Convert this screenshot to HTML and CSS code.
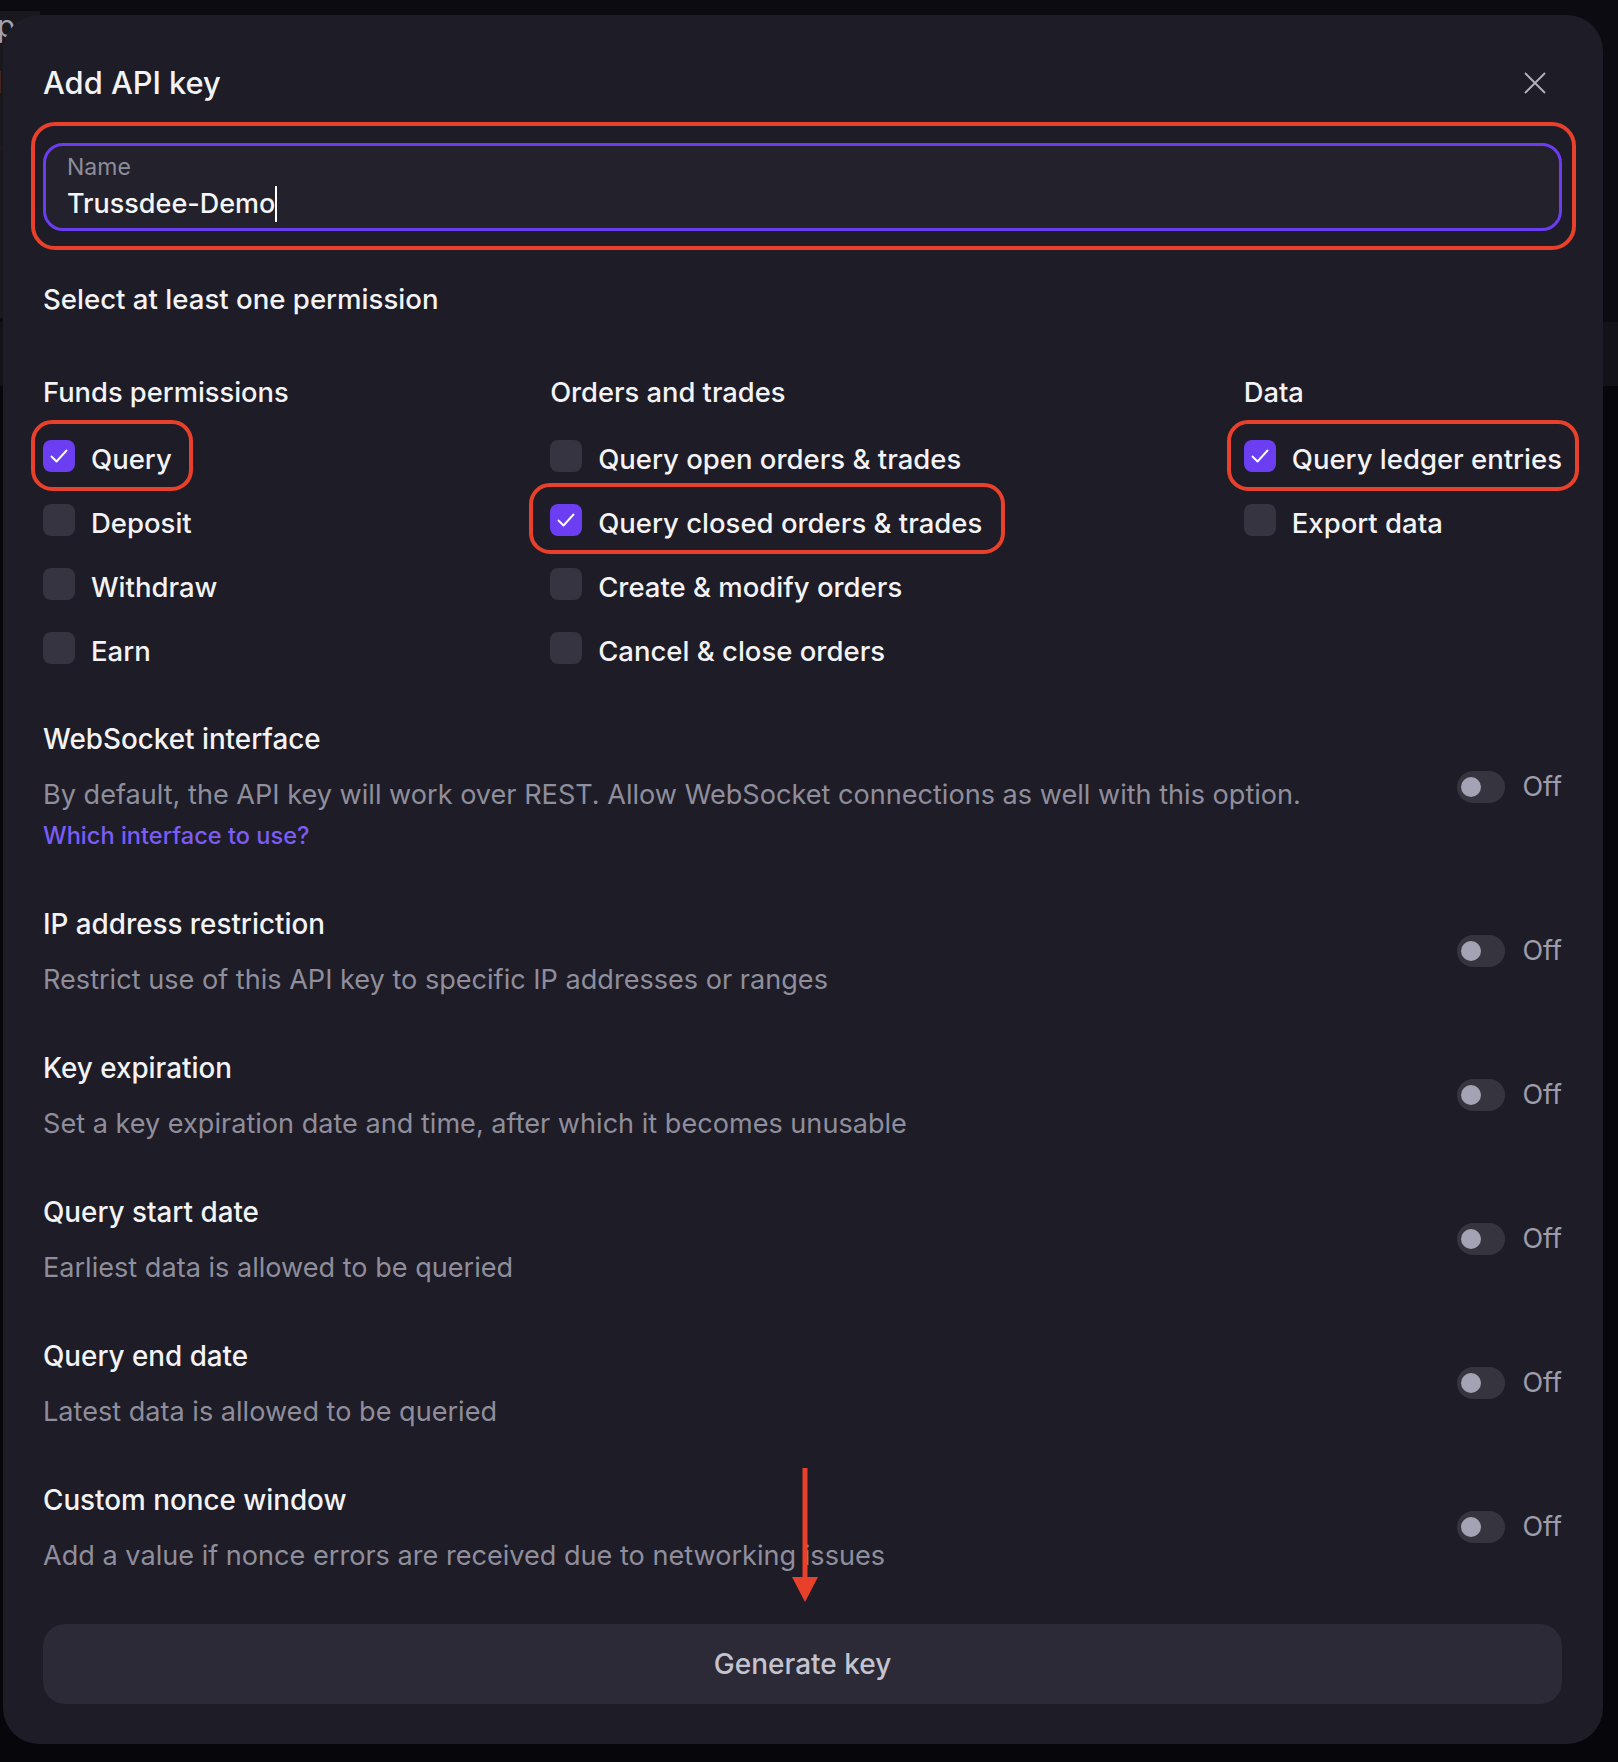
FILE: index.html
```html
<!DOCTYPE html>
<html lang="en">
<head>
<meta charset="utf-8">
<title>Add API key</title>
<link rel="stylesheet" href="styles.css">
</head>
<body>
<div class="backdrop">
  <div class="bd-top">
    <div class="side">
      <div class="ghost g1">p</div>
      <div class="ghost g2">l</div>
      <div class="ghost g3">e</div>
    </div>
  </div>
  <div class="bd-mid"></div>
  <div class="bd-rest"></div>
</div>

<div class="modal" role="dialog" aria-label="Add API key">
  <header class="modal-head">
    <h2 class="modal-title">Add API key</h2>
    <button class="close" aria-label="Close">
      <svg width="22" height="22" viewBox="0 0 22 22"><path d="M1 1L21 21M21 1L1 21" stroke="#b3b2be" stroke-width="1.8" fill="none"/></svg>
    </button>
  </header>

  <div class="field hl hl-name">
    <label class="field-label">Name</label>
    <div class="field-value">Trussdee-Demo<span class="caret"></span></div>
  </div>

  <p class="lead">Select at least one permission</p>

  <div class="perm-cols">
    <div class="col">
      <h3 class="col-title">Funds permissions</h3>
      <ul class="opts">
        <li class="opt on hl hl-query"><span class="box"><svg width="32" height="32" viewBox="0 0 32 32"><path d="M8.5 16.5L13.5 21.5L23.5 10.5" stroke="#fff" stroke-width="1.9" fill="none" stroke-linecap="round" stroke-linejoin="round"/></svg></span>Query</li>
        <li class="opt"><span class="box"></span>Deposit</li>
        <li class="opt"><span class="box"></span>Withdraw</li>
        <li class="opt"><span class="box"></span>Earn</li>
      </ul>
    </div>
    <div class="col">
      <h3 class="col-title">Orders and trades</h3>
      <ul class="opts">
        <li class="opt"><span class="box"></span>Query open orders &amp; trades</li>
        <li class="opt on hl hl-closed"><span class="box"><svg width="32" height="32" viewBox="0 0 32 32"><path d="M8.5 16.5L13.5 21.5L23.5 10.5" stroke="#fff" stroke-width="1.9" fill="none" stroke-linecap="round" stroke-linejoin="round"/></svg></span>Query closed orders &amp; trades</li>
        <li class="opt"><span class="box"></span>Create &amp; modify orders</li>
        <li class="opt"><span class="box"></span>Cancel &amp; close orders</li>
      </ul>
    </div>
    <div class="col">
      <h3 class="col-title">Data</h3>
      <ul class="opts">
        <li class="opt on hl hl-ledger"><span class="box"><svg width="32" height="32" viewBox="0 0 32 32"><path d="M8.5 16.5L13.5 21.5L23.5 10.5" stroke="#fff" stroke-width="1.9" fill="none" stroke-linecap="round" stroke-linejoin="round"/></svg></span>Query ledger entries</li>
        <li class="opt"><span class="box"></span>Export data</li>
      </ul>
    </div>
  </div>

  <div class="settings">
    <section class="setting">
      <div class="setting-text">
        <h4 class="setting-title">WebSocket interface</h4>
        <p class="setting-desc">By default, the API key will work over REST. Allow WebSocket connections as well with this option.</p>
        <a class="setting-link">Which interface to use?</a>
      </div>
      <div class="toggle"><span class="track"><span class="knob"></span></span>Off</div>
    </section>
    <section class="setting">
      <div class="setting-text">
        <h4 class="setting-title">IP address restriction</h4>
        <p class="setting-desc">Restrict use of this API key to specific IP addresses or ranges</p>
      </div>
      <div class="toggle"><span class="track"><span class="knob"></span></span>Off</div>
    </section>
    <section class="setting">
      <div class="setting-text">
        <h4 class="setting-title">Key expiration</h4>
        <p class="setting-desc">Set a key expiration date and time, after which it becomes unusable</p>
      </div>
      <div class="toggle"><span class="track"><span class="knob"></span></span>Off</div>
    </section>
    <section class="setting">
      <div class="setting-text">
        <h4 class="setting-title">Query start date</h4>
        <p class="setting-desc">Earliest data is allowed to be queried</p>
      </div>
      <div class="toggle"><span class="track"><span class="knob"></span></span>Off</div>
    </section>
    <section class="setting">
      <div class="setting-text">
        <h4 class="setting-title">Query end date</h4>
        <p class="setting-desc">Latest data is allowed to be queried</p>
      </div>
      <div class="toggle"><span class="track"><span class="knob"></span></span>Off</div>
    </section>
    <section class="setting">
      <div class="setting-text">
        <h4 class="setting-title">Custom nonce window</h4>
        <p class="setting-desc">Add a value if nonce errors are received due to networking issues</p>
      </div>
      <div class="toggle"><span class="track"><span class="knob"></span></span>Off</div>
    </section>
  </div>

  <button class="generate">Generate key</button>

  <svg class="arrow" width="26" height="134" viewBox="0 0 26 134"><rect x="10.5" y="0" width="5" height="112" fill="#e8402a"/><polygon points="0,109 26,109 13,134" fill="#e8402a"/></svg>
</div>
</body>
</html>
```

FILE: styles.css
```css
html, body {
  margin: 0;
  padding: 0;
}

body {
  width: 1618px;
  height: 1762px;
  overflow: hidden;
  position: relative;
  background: #07060b;
  font-family: Inter, "Noto Sans", "Liberation Sans", sans-serif;
  -webkit-font-smoothing: antialiased;
}

/* page behind the dialog */
.backdrop {
  height: 1762px;
  display: flex;
  flex-direction: column;
}

.bd-top {
  height: 322px;
  background: #0c0b11;
}

.side {
  width: 40px;
  height: 307px;
  margin-top: 15px;
  background: #19181f;
}

.ghost {
  color: #a2a1ac;
  font-size: 30px;
  line-height: 30px;
}

.g1 {
  margin-top: -4px;
  margin-left: -3px;
}

.g2 {
  margin-top: 26px;
  margin-left: -5px;
}

.g3 {
  margin-top: 34px;
  margin-left: -12px;
  font-size: 22px;
}

.bd-mid {
  height: 64px;
  background: #131219;
}

.bd-rest {
  flex: 1;
  background: #07060b;
}

/* dialog */
.modal {
  position: absolute;
  top: 15px;
  left: 3px;
  width: 1600px;
  box-sizing: border-box;
  padding: 48px 41px 40px 40px;
  background: #1e1c26;
  border-radius: 36px;
  color: #f3f3f6;
}

.modal-head {
  display: flex;
  justify-content: space-between;
  align-items: center;
  height: 40px;
}

.modal-title {
  margin: 0;
  font-size: 30.8px;
  line-height: 40px;
  font-weight: 500;
}

.close {
  width: 22px;
  height: 22px;
  padding: 0;
  margin-right: 16px;
  border: 0;
  background: none;
  display: flex;
}

/* name field */
.field {
  position: relative;
  margin-top: 40px;
  border: 3px solid #6a3df0;
  border-radius: 20px;
  background: #23212b;
  padding: 8px 21px 6px;
}

.field-label {
  display: block;
  font-size: 23px;
  line-height: 26px;
  color: #8e8d9b;
}

.field-value {
  display: flex;
  align-items: center;
  margin-top: 6px;
  font-size: 27px;
  line-height: 32px;
  font-weight: 500;
  color: #f5f5f7;
}

.caret {
  width: 2px;
  height: 36px;
  background: #ffffff;
}

.lead {
  margin: 52px 0 0;
  font-size: 27.6px;
  line-height: 32px;
  font-weight: 500;
}

/* permission columns */
.perm-cols {
  display: flex;
  justify-content: space-between;
  margin-top: 62px;
}

.col-title {
  margin: 0;
  font-size: 27.3px;
  line-height: 32px;
  font-weight: 500;
}

.opts {
  list-style: none;
  margin: 31px 0 0;
  padding: 0;
  display: flex;
  flex-direction: column;
  align-items: flex-start;
  gap: 26px;
}

.opt {
  position: relative;
  display: flex;
  align-items: flex-start;
  gap: 16px;
  font-size: 27.5px;
  line-height: 38px;
  font-weight: 500;
  color: #f3f3f6;
}

.box {
  flex: none;
  display: flex;
  width: 32px;
  height: 32px;
  border-radius: 8px;
  background: #363440;
}

.opt.on .box {
  background: #6b3ef2;
}

/* red annotation outlines */
.hl::after {
  content: "";
  position: absolute;
  border: 4px solid #e8402a;
  border-radius: 21px;
  pointer-events: none;
}

.hl-name::after {
  top: -24px;
  right: -17px;
  bottom: -22px;
  left: -15px;
  border-radius: 24px;
}

.hl-query::after {
  top: -20px;
  right: -21px;
  bottom: -13px;
  left: -12px;
}

.hl-closed::after {
  top: -21px;
  right: -23px;
  bottom: -12px;
  left: -21px;
}

.hl-ledger::after {
  top: -20px;
  right: -17px;
  bottom: -13px;
  left: -17px;
}

/* settings */
.settings {
  margin-top: 53px;
  display: flex;
  flex-direction: column;
  gap: 52px;
}

.setting {
  display: flex;
  align-items: center;
  justify-content: space-between;
}

.setting-title {
  margin: 0;
  font-size: 27.8px;
  line-height: 32px;
  font-weight: 500;
}

.setting-desc {
  margin: 20px 0 0;
  font-size: 27.1px;
  line-height: 40px;
  color: #8f8e9c;
}

.setting-link {
  display: block;
  margin-top: 0;
  font-size: 23.6px;
  line-height: 41px;
  font-weight: 500;
  color: #7b5cf6;
}

.toggle {
  display: flex;
  align-items: center;
  gap: 17px;
  margin-bottom: 6px;
  font-size: 27px;
  line-height: 32px;
  color: #9e9dac;
}

.track {
  display: flex;
  box-sizing: border-box;
  width: 48px;
  height: 32px;
  padding: 6px 4px;
  border-radius: 16px;
  background: #36343f;
}

.knob {
  width: 20px;
  height: 20px;
  border-radius: 50%;
  background: #a4a3b5;
}

.generate {
  display: block;
  width: 100%;
  height: 80px;
  margin-top: 48px;
  border: 0;
  border-radius: 22px;
  background: #2b2a36;
  color: #c4c3cf;
  font-family: Inter, "Noto Sans", "Liberation Sans", sans-serif;
  font-size: 28px;
  font-weight: 500;
}

.arrow {
  position: absolute;
  left: 789px;
  top: 1453px;
}
```
